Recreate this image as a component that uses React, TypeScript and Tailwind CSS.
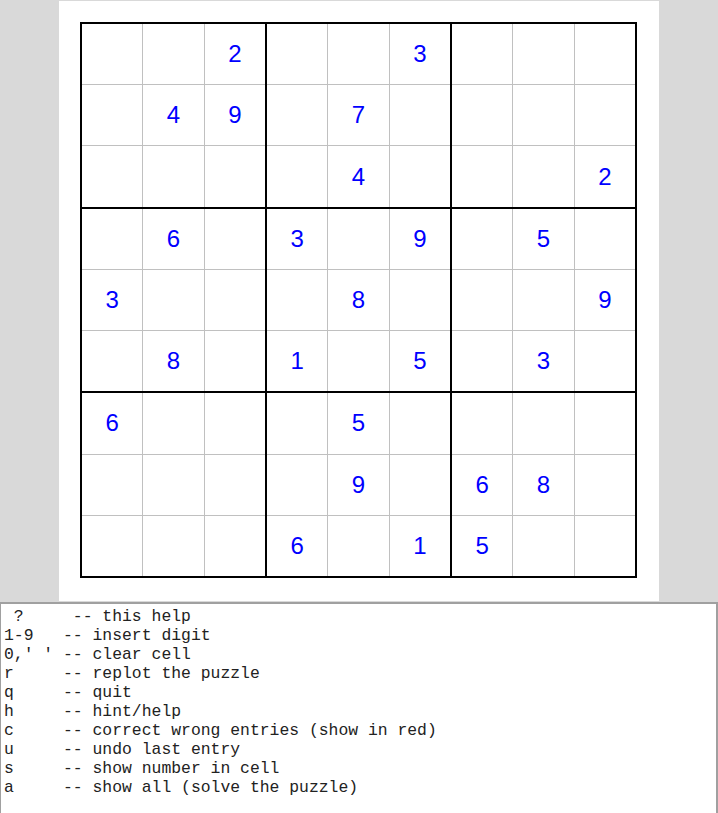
const puzzle: string[] = [
  "..2..3...",
  ".49.7....",
  "....4...2",
  ".6.3.9.5.",
  "3...8...9",
  ".8.1.5.3.",
  "6...5....",
  "....9.68.",
  "...6.15..",
];

const helpLines = [
  " ?     -- this help",
  "1-9   -- insert digit",
  "0,' ' -- clear cell",
  "r     -- replot the puzzle",
  "q     -- quit",
  "h     -- hint/help",
  "c     -- correct wrong entries (show in red)",
  "u     -- undo last entry",
  "s     -- show number in cell",
  "a     -- show all (solve the puzzle)",
];

function Box({ br, bc }: { br: number; bc: number }) {
  const cells: string[] = [];
  for (let r = 0; r < 3; r++) {
    for (let c = 0; c < 3; c++) {
      cells.push(puzzle[br * 3 + r][bc * 3 + c]);
    }
  }
  return (
    <div className="grid grid-cols-3 grid-rows-3 gap-px bg-[#c0c0c0]">
      {cells.map((d, i) => (
        <div
          key={i}
          className="bg-white flex items-center justify-center text-[24px] text-[#0000ff] font-['Liberation_Sans',Arial,sans-serif] leading-none"
        >
          {d === "." ? "" : d}
        </div>
      ))}
    </div>
  );
}

export default function App() {
  return (
    <div className="w-[718px] h-[813px] bg-[#d9d9d9] overflow-hidden flex flex-col">
      {/* plot canvas */}
      <div className="mt-px ml-[59px] w-[600px] h-[600px] bg-white pt-[21px] pl-[21px]">
        <div className="w-[557px] h-[556px] border-2 border-black bg-black grid grid-cols-3 grid-rows-3 gap-[2px]">
          {[0, 1, 2].map((br) =>
            [0, 1, 2].map((bc) => <Box key={`${br}-${bc}`} br={br} bc={bc} />)
          )}
        </div>
      </div>

      {/* help text widget */}
      <div className="mt-px flex-1 bg-white border-t-2 border-l border-r-2 border-[#a0a0a0] pt-[3px] pl-[3px]">
        {helpLines.map((line, i) => (
          <div
            key={i}
            className="whitespace-pre h-[19px] leading-[19px] text-[16.4px] text-[#222] font-['Liberation_Mono','Courier_New',monospace]"
          >
            {line}
          </div>
        ))}
      </div>
    </div>
  );
}
